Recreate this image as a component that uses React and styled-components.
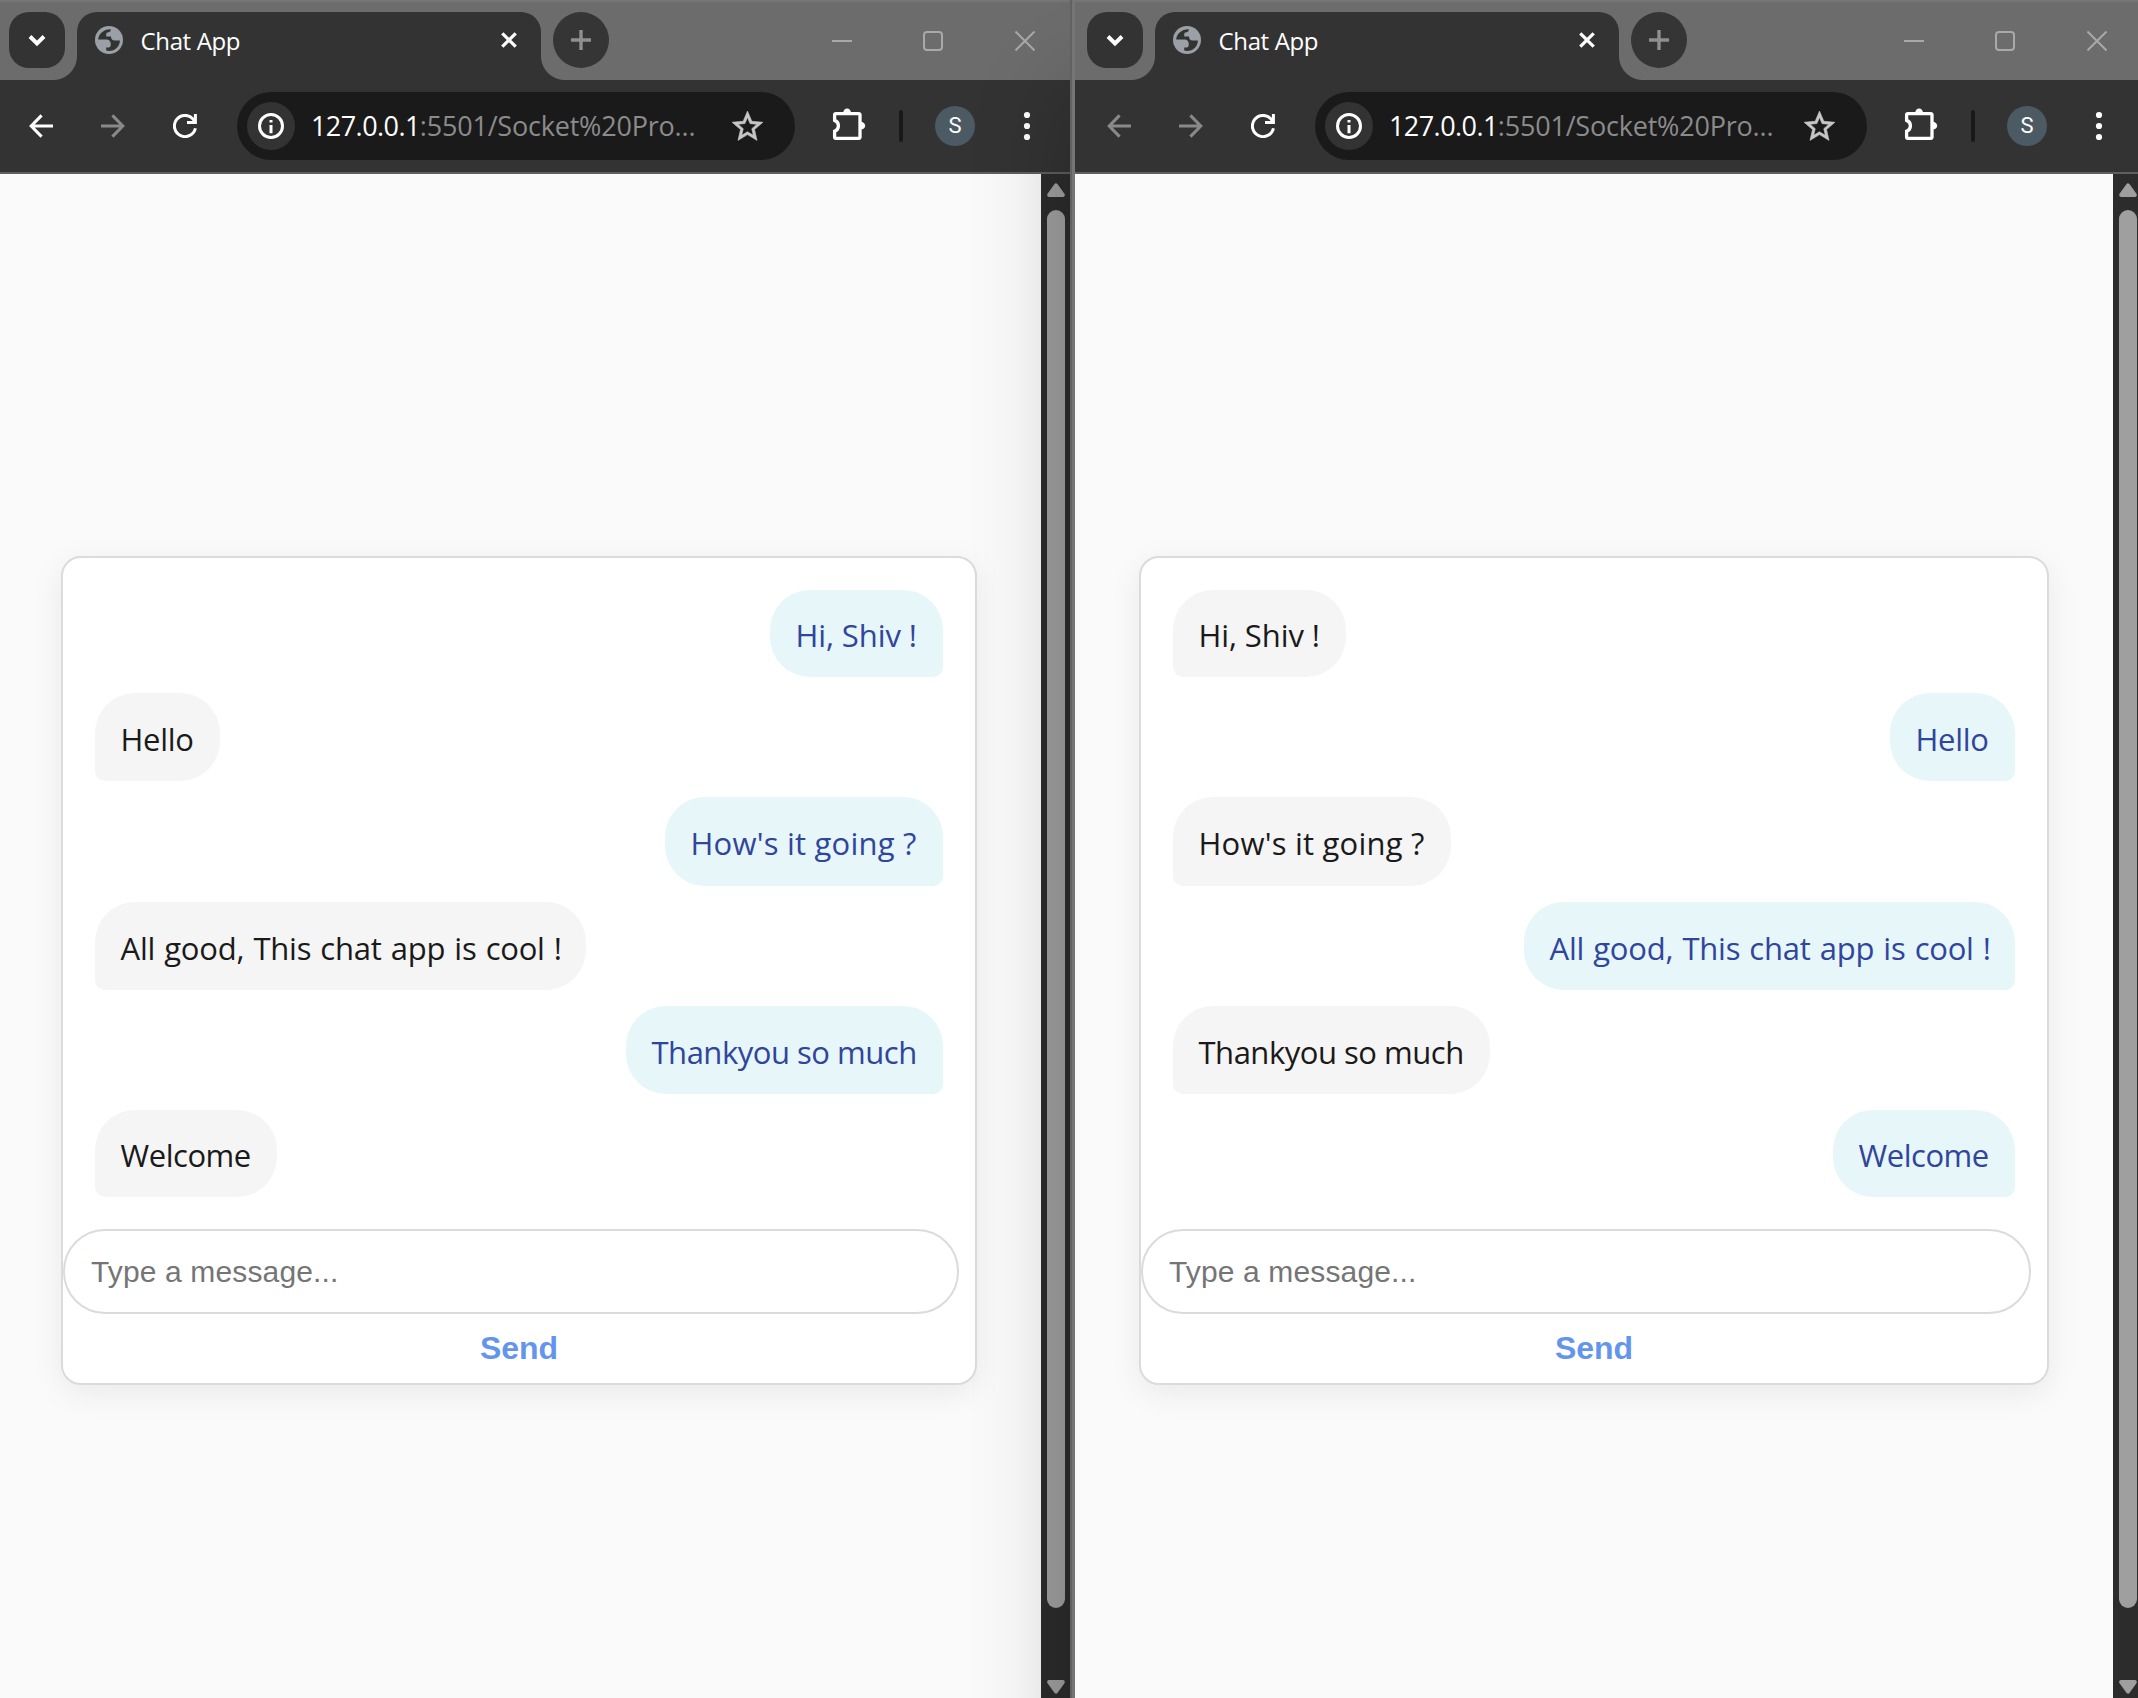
import React from "react";
import styled, { createGlobalStyle } from "styled-components";

const uiFont = `"Segoe UI", "Open Sans", "Noto Sans", sans-serif`;
const formFont = `Arial, "Liberation Sans", sans-serif`;

const GlobalStyle = createGlobalStyle`
  * { box-sizing: border-box; }
  body { margin: 0; background: #fafafa; }
`;

const Desktop = styled.main`
  display: flex;
  width: 2138px;
  height: 1698px;
  overflow: hidden;
  font-family: ${uiFont};
`;

const WindowFrame = styled.section`
  position: relative;
  flex: none;
  width: ${(p) => p.$width}px;
  padding-left: ${(p) => p.$edge}px;
  background: linear-gradient(to right, #626262 2px, #757575 2px);
  box-shadow: ${(p) => (p.$raised ? "0 90px 90px rgba(0, 0, 0, 0.24)" : "none")};
`;

const WindowBody = styled.div`
  display: flex;
  flex-direction: column;
  width: ${(p) => p.$width}px;
  height: 1698px;
  --inset: ${(p) => p.$inset}px;
`;

const TitleBar = styled.header`
  display: flex;
  align-items: flex-start;
  height: 80px;
  padding: 10px 35px 0 calc(9px + var(--inset));
  border-top: 2px solid #757575;
  background: #6c6c6c;
`;

const TabSearch = styled.button`
  display: grid;
  place-items: center;
  width: 56px;
  height: 56px;
  padding: 0;
  border: 0;
  border-radius: 20px;
  background: #333;
`;

const Tab = styled.div`
  position: relative;
  display: flex;
  align-items: center;
  width: 464px;
  height: 68px;
  margin: 0 12px;
  padding: 0 24px 12px 18px;
  border-radius: 20px 20px 0 0;
  background: #333;

  &::before,
  &::after {
    content: "";
    position: absolute;
    bottom: 0;
    width: 24px;
    height: 24px;
  }
  &::before {
    right: 100%;
    background: radial-gradient(circle at 0 0, transparent 23.5px, #333 24.5px);
  }
  &::after {
    left: 100%;
    background: radial-gradient(circle at 100% 0, transparent 23.5px, #333 24.5px);
  }
`;

const TabTitle = styled.span`
  flex: 1;
  padding: 2px 0 0 17.5px;
  color: #fff;
  font-size: 24px;
  line-height: 32px;
  letter-spacing: -0.35px;
`;

const NewTab = styled(TabSearch)`
  border-radius: 50%;
  background: #353535;
`;

const WindowControls = styled.div`
  display: flex;
  gap: 71px;
  margin: 19px 0 0 auto;

  & > :last-child {
    margin-left: 1px;
  }
`;

const Toolbar = styled.nav`
  display: flex;
  align-items: center;
  height: 94px;
  padding: 0 31px 0 calc(5px + var(--inset));
  border-bottom: 2px solid #5f5f5f;
  background: #333;
`;

const NavButton = styled.button`
  display: grid;
  place-items: center;
  width: 72px;
  height: 72px;
  padding: 0;
  border: 0;
  background: none;
  color: ${(p) => (p.$dim ? "#898989" : "#fff")};
`;

const AddressBar = styled.div`
  display: flex;
  flex: 1;
  align-items: center;
  height: 68px;
  margin: 0 34px 0 16px;
  padding: 0 29px 0 10px;
  border-radius: 34px;
  background: #1a1a1a;
`;

const SiteInfo = styled.span`
  display: grid;
  place-items: center;
  width: 48px;
  height: 48px;
  margin-right: 16px;
  border-radius: 50%;
  background: #333;
`;

const Address = styled.span`
  flex: 1;
  color: #8b8b8b;
  font-size: 27px;
  line-height: 36px;
  letter-spacing: -0.2px;
  white-space: nowrap;
`;

const Host = styled.span`
  color: #fff;
  letter-spacing: -0.57px;
`;

const ToolDivider = styled.span`
  width: 4px;
  height: 32px;
  margin: 0 32px 0 30px;
  border-radius: 2px;
  background: #1a1a1a;
`;

const Avatar = styled.span`
  display: grid;
  place-items: center;
  width: 40px;
  height: 40px;
  margin-right: 40px;
  border-radius: 50%;
  background: #4c5a64;
  color: #fff;
  font: 22px/40px Roboto, sans-serif;
`;

const Viewport = styled.div`
  display: flex;
  flex: 1;
  min-height: 0;
`;

const Page = styled.div`
  flex: 1;
  padding: 382px 0 0 calc(61px + var(--inset));
  background: #fafafa;
`;

const ScrollBar = styled.aside`
  display: flex;
  flex-direction: column;
  width: 29px;
  padding: 9px 0 4px 6px;
  background: #2c2c2c;
`;

const ScrollThumb = styled.div`
  width: 18px;
  height: 1398px;
  margin: 13px 0 auto;
  border-radius: 9px;
  background: #9f9f9f;
`;

const ChatCard = styled.article`
  display: flex;
  flex-direction: column;
  width: ${(p) => p.$width}px;
  height: 829px;
  border: 2px solid #dbdbdb;
  border-radius: 20px;
  background: #fff;
  box-shadow: 0 8px 32px rgba(0, 0, 0, 0.07);
`;

const MessageList = styled.div`
  display: flex;
  flex-direction: column;
  gap: 16px;
  padding: 32px;
`;

const Bubble = styled.div`
  display: flex;
  align-items: center;
  align-self: ${(p) => (p.$own ? "flex-end" : "flex-start")};
  width: ${(p) => p.$width}px;
  height: ${(p) => p.$height}px;
  padding: 3px 0 0 25.5px;
  border-radius: ${(p) => (p.$own ? "40px 40px 10px 40px" : "40px 40px 40px 10px")};
  background: ${(p) => (p.$own ? "#e6f6f9" : "#f5f5f5")};
  color: ${(p) => (p.$own ? "#30459b" : "#1a1a1a")};
  font-size: 31px;
  line-height: 48px;
  letter-spacing: ${(p) => p.$tracking}px;
  word-spacing: ${(p) => p.$wordGap || 0}px;
  white-space: nowrap;
`;

const MessageInput = styled.input`
  width: calc(100% - 16px);
  height: 85px;
  padding: 0 26px;
  border: 2px solid #dbdbdb;
  border-radius: 42px;
  outline: 0;
  background: #fff;
  font: 30px ${formFont};
  letter-spacing: 0.14px;

  &::placeholder {
    color: #757575;
    opacity: 1;
  }
`;

const SendButton = styled.button`
  flex: 1;
  padding: 0;
  border: 0;
  background: none;
  color: #6495ed;
  font: bold 32px ${formFont};
`;

const Stroke = ({ size, width = 3, color = "currentColor", children, ...rest }) => (
  <svg width={size} height={size} viewBox={`0 0 ${size} ${size}`} fill="none" stroke={color} strokeWidth={width} {...rest}>
    {children}
  </svg>
);

const ChevronIcon = () => (
  <Stroke size={20} width={4} color="#fff"><path d="M3 6.5L10 13.5L17 6.5" /></Stroke>
);

const GlobeIcon = () => (
  <svg width="28" height="28" viewBox="0 0 28 28">
    <circle cx="14" cy="14" r="14" fill="#9aa0a6" />
    <path
      fill="#333"
      d="M3.2 13.6C3.3 8.2 8.4 3.1 15.8 3.2C15.8 5 14.8 6.3 13.4 6.3C12 6.3 11.2 7.1 11.2 8.4V10.6H16C16 12.8 17 14.4 19 14.4H24.9C24.8 20.4 20 24.9 14.2 24.9C13.2 24.9 12.2 24.8 11.2 24.5V21.6H13C14.8 21.6 15.8 20.4 15.8 18.5C15.8 15.4 14.2 13.6 11.4 13.6Z"
    />
  </svg>
);

const CloseIcon = () => (
  <Stroke size={16} width={3.2} color="#fff"><path d="M1.3 1.3L14.7 14.7M14.7 1.3L1.3 14.7" /></Stroke>
);

const PlusIcon = () => (
  <Stroke size={20} width={3.4} color="#8f8f8f"><path d="M10 0V20M0 10H20" /></Stroke>
);

const MinimizeIcon = () => (
  <Stroke size={20} width={2} color="#a9a9a9"><path d="M0 10H20" /></Stroke>
);

const MaximizeIcon = () => (
  <Stroke size={20} width={2} color="#a9a9a9"><rect x="1" y="1" width="18" height="18" rx="3" /></Stroke>
);

const CloseWindowIcon = () => (
  <Stroke size={20} width={2} color="#a9a9a9"><path d="M.5 .5L19.5 19.5M19.5 .5L.5 19.5" /></Stroke>
);

const BackIcon = () => (
  <Stroke size={24}><path d="M24 12H2.6M12.6 1.4L2.2 12L12.6 22.6" /></Stroke>
);

const ForwardIcon = () => (
  <Stroke size={24}><path d="M0 12H21.4M11.4 1.4L21.8 12L11.4 22.6" /></Stroke>
);

const ReloadIcon = () => (
  <Stroke size={24}>
    <path d="M22.4 14.2A10.6 10.6 0 1 1 20 5L22 8" />
    <path d="M22.4 0V8.5H14" />
  </Stroke>
);

const InfoIcon = () => (
  <Stroke size={26} width={3} color="#fff">
    <circle cx="13" cy="13" r="11.5" />
    <path d="M13 7V9.6M13 12V20.2" />
  </Stroke>
);

const StarIcon = () => (
  <svg width="37" height="37" viewBox="0 0 24 24" fill="#c7c7c7" stroke="#c7c7c7" strokeWidth="0.4">
    <path d="M22 9.24l-7.19-.62L12 2 9.19 8.63 2 9.24l5.46 4.73L5.82 21 12 17.27 18.18 21l-1.63-7.03L22 9.24zM12 15.4l-3.76 2.27 1-4.28-3.32-2.88 4.38-.38L12 6.1l1.71 4.04 4.38.38-3.32 2.88 1 4.28L12 15.4z" />
  </svg>
);

const PuzzleIcon = () => (
  <Stroke size={40} width={3.3} color="#fff">
    <path d="M6.8 7.7H29.6Q31 7.7 31 9.1V31Q31 32.4 29.6 32.4H7Q5.6 32.4 5.6 31V25.2C8 24.4 9.4 22.4 9.4 19.8C9.4 17.2 8 15.2 5.6 14.4V9Q5.6 7.7 6.8 7.7Z" />
    <path d="M14.2 7A3.9 4.6 0 0 1 22 7ZM31.6 15.8A4.6 3.9 0 0 1 31.6 23.6Z" fill="#fff" stroke="none" />
  </Stroke>
);

const MenuIcon = () => (
  <svg width="24" height="30" viewBox="0 0 24 30" fill="#fff">
    <circle cx="12" cy="4" r="3.1" />
    <circle cx="12" cy="15" r="3.1" />
    <circle cx="12" cy="26" r="3.1" />
  </svg>
);

const ArrowUp = () => (
  <svg width="18" height="14" viewBox="0 0 18 14" fill="#9f9f9f" stroke="#9f9f9f" strokeWidth="4" strokeLinejoin="round">
    <path d="M9 2.4L15.8 12H2.2Z" />
  </svg>
);

const ArrowDown = () => (
  <svg width="18" height="14" viewBox="0 0 18 14" fill="#9f9f9f" stroke="#9f9f9f" strokeWidth="4" strokeLinejoin="round">
    <path d="M9 11.6L2.2 2H15.8Z" />
  </svg>
);

const conversation = [
  { from: "visitor", text: "Hi, Shiv !", width: 173, height: 87, tracking: -0.1 },
  { from: "shiv", text: "Hello", width: 125, height: 88, tracking: -0.3 },
  { from: "visitor", text: "How's it going ?", width: 278, height: 89, tracking: 0.22 },
  { from: "shiv", text: "All good, This chat app is cool !", width: 491, height: 88, tracking: -0.22, wordGap: 1.3 },
  { from: "visitor", text: "Thankyou so much", width: 317, height: 88, tracking: -0.48 },
  { from: "shiv", text: "Welcome", width: 182, height: 87, tracking: -0.45 },
];

function BrowserWindow({ user, canGoBack, width, edge = 0, bodyWidth, inset = 0, cardWidth, raised }) {
  return (
    <WindowFrame $width={width} $edge={edge} $raised={raised}>
      <WindowBody $width={bodyWidth} $inset={inset}>
        <TitleBar>
          <TabSearch aria-label="Search tabs"><ChevronIcon /></TabSearch>
          <Tab>
            <GlobeIcon />
            <TabTitle>Chat App</TabTitle>
            <CloseIcon />
          </Tab>
          <NewTab aria-label="New tab"><PlusIcon /></NewTab>
          <WindowControls>
            <MinimizeIcon />
            <MaximizeIcon />
            <CloseWindowIcon />
          </WindowControls>
        </TitleBar>
        <Toolbar>
          <NavButton $dim={!canGoBack} aria-label="Back"><BackIcon /></NavButton>
          <NavButton $dim aria-label="Forward"><ForwardIcon /></NavButton>
          <NavButton aria-label="Reload"><ReloadIcon /></NavButton>
          <AddressBar>
            <SiteInfo><InfoIcon /></SiteInfo>
            <Address><Host>127.0.0.1</Host>:5501/Socket%20Pro...</Address>
            <StarIcon />
          </AddressBar>
          <PuzzleIcon />
          <ToolDivider />
          <Avatar>S</Avatar>
          <MenuIcon />
        </Toolbar>
        <Viewport>
          <Page>
            <ChatCard $width={cardWidth}>
              <MessageList>
                {conversation.map((m) => (
                  <Bubble
                    key={m.text}
                    $own={m.from === user}
                    $width={m.width}
                    $height={m.height}
                    $tracking={m.tracking}
                    $wordGap={m.wordGap}
                  >
                    {m.text}
                  </Bubble>
                ))}
              </MessageList>
              <MessageInput placeholder="Type a message..." />
              <SendButton>Send</SendButton>
            </ChatCard>
          </Page>
          <ScrollBar>
            <ArrowUp />
            <ScrollThumb />
            <ArrowDown />
          </ScrollBar>
        </Viewport>
      </WindowBody>
    </WindowFrame>
  );
}

export default function App() {
  return (
    <>
      <GlobalStyle />
      <Desktop>
        <BrowserWindow user="visitor" canGoBack width={1070} bodyWidth={1070} cardWidth={916} />
        <BrowserWindow user="shiv" width={1072} edge={5} bodyWidth={1067} inset={3} cardWidth={910} raised />
      </Desktop>
    </>
  );
}
